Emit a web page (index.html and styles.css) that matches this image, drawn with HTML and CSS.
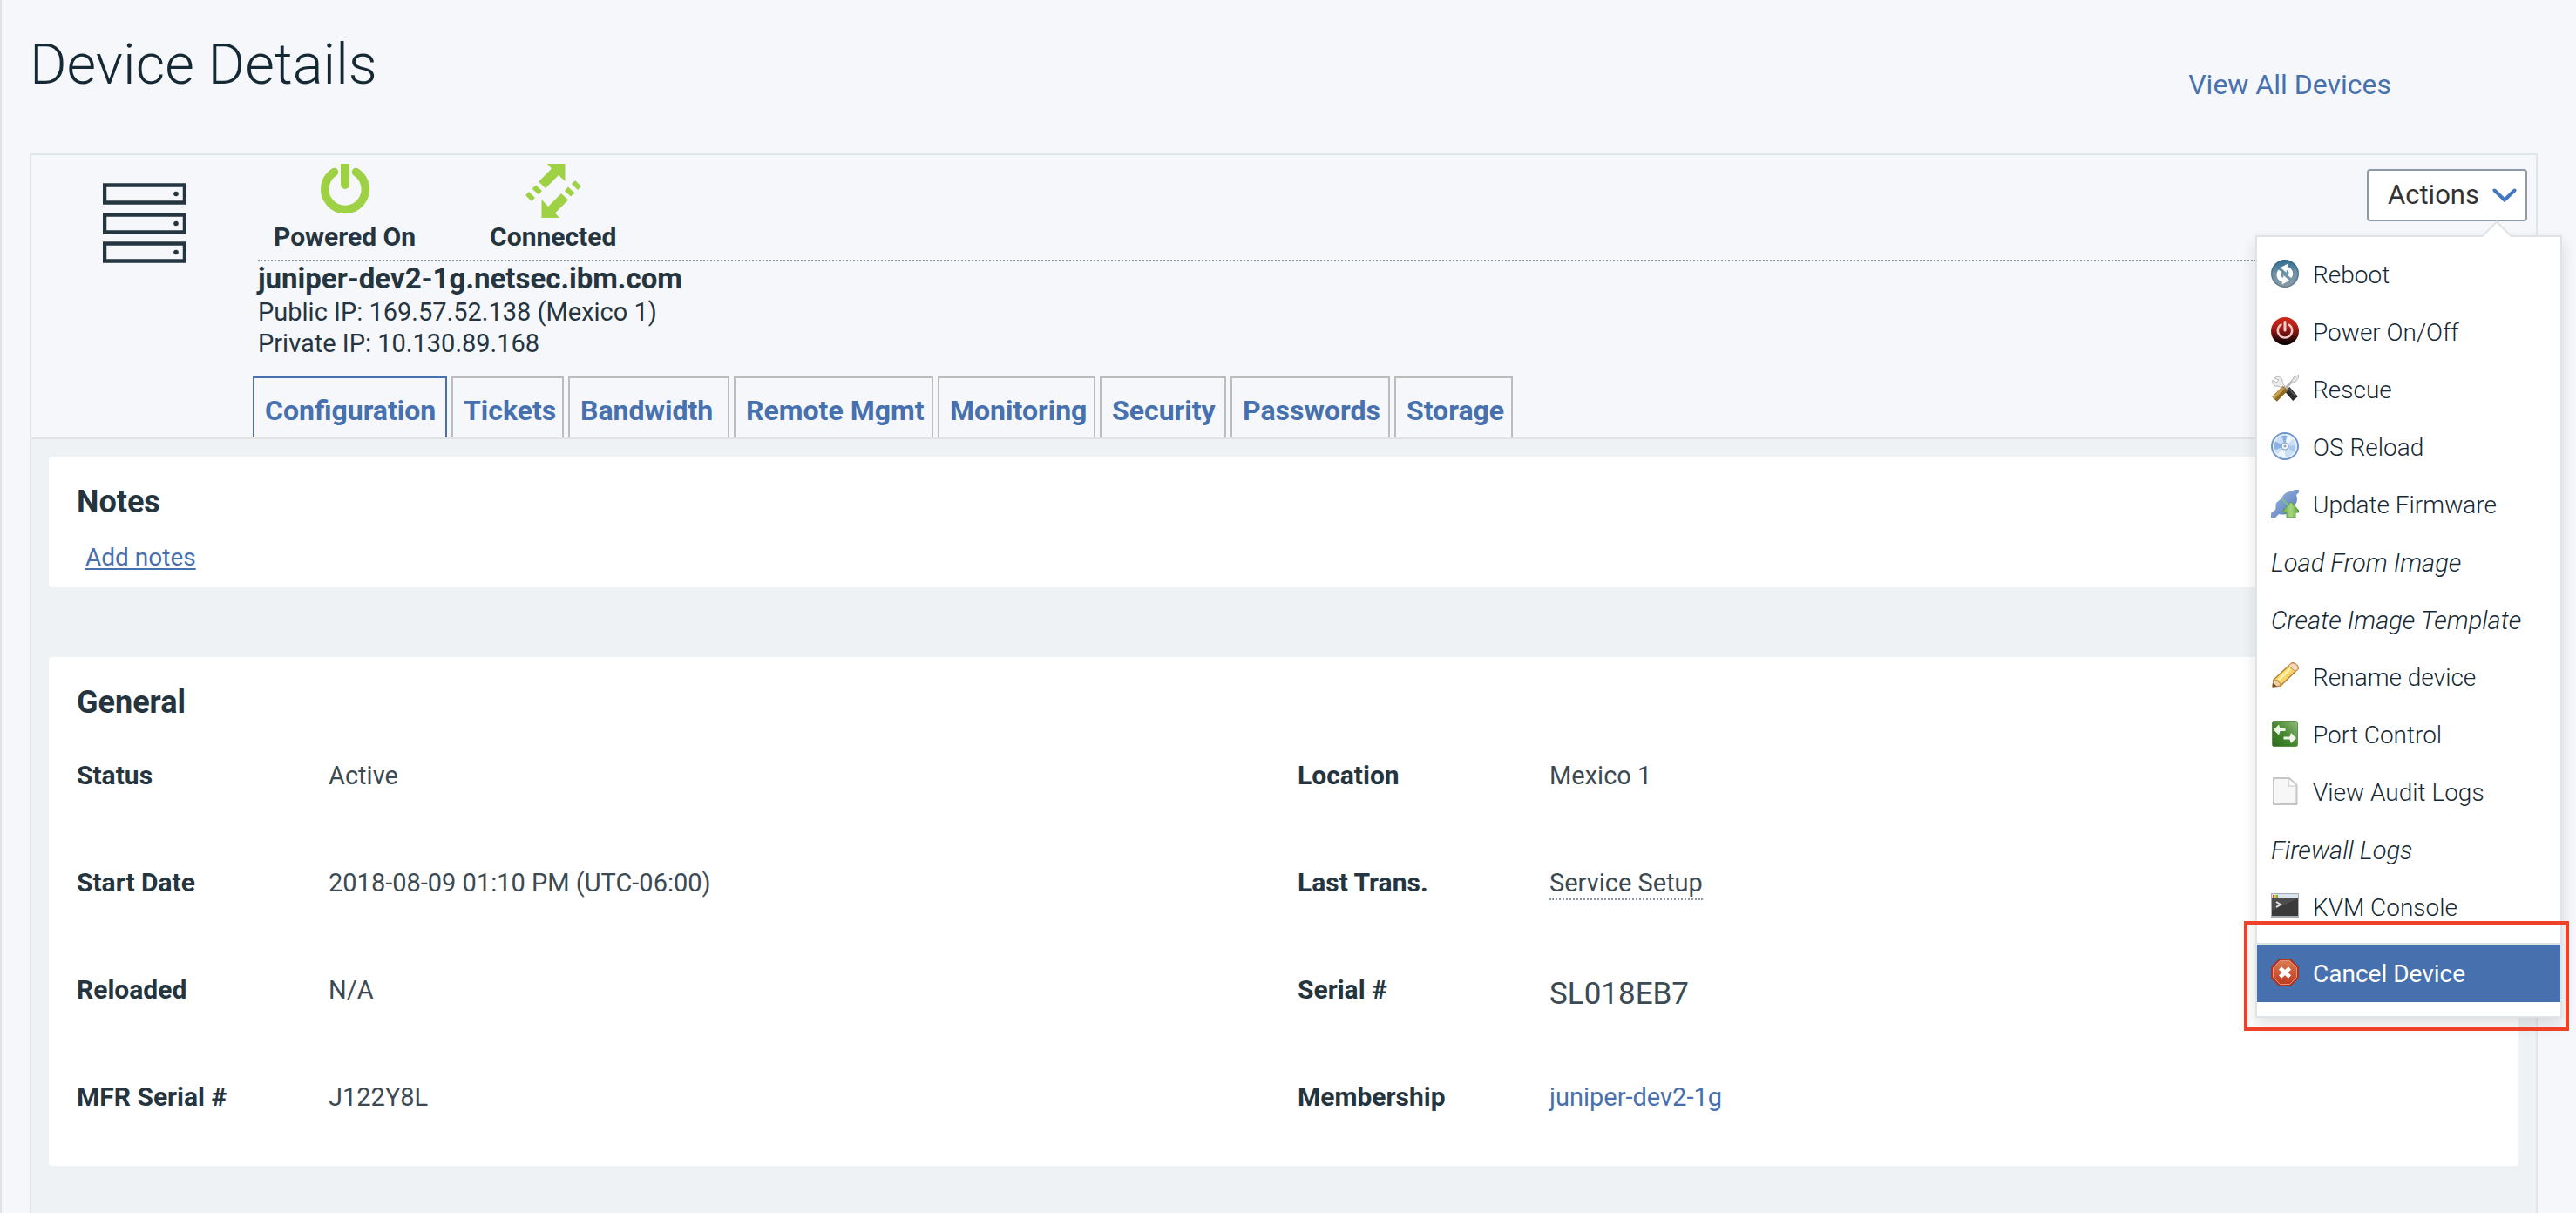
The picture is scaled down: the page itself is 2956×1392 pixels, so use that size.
FILE: index.html
```html
<!DOCTYPE html>
<html lang="en">
<head>
<meta charset="utf-8">
<title>Device Details</title>
<link rel="stylesheet" href="styles.css">
</head>
<body>
<header class="page-head">
  <h1 class="page-title">Device Details</h1>
  <a class="view-all" href="#devices">View All Devices</a>
</header>

<main class="card">
  <section class="device">
    <svg class="server-icon" viewBox="0 0 96 92" aria-hidden="true">
      <g fill="none" stroke="#253540" stroke-width="4.500">
        <path d="M2 2.500h92v20H2zM2 36.500h92v20H2zM2 69.500h92v20H2z"/>
      </g>
      <g fill="#253540"><circle cx="84" cy="12.500" r="2.800"/><circle cx="84" cy="46.500" r="2.800"/><circle cx="84" cy="79.500" r="2.800"/></g>
    </svg>

    <div class="device-main">
      <div class="states">
        <div class="state">
          <svg width="64" height="62" viewBox="0 0 64 62" aria-hidden="true">
            <path d="M19.500 9.500A23.300 23.300 0 1 0 44.500 9.500" fill="none" stroke="#9fd145" stroke-width="9.500" stroke-linecap="round"/>
            <path d="M27 0h10v24a5 5 0 0 1-10 0z" fill="#9fd145"/>
          </svg>
          <span>Powered On</span>
        </div>
        <div class="state">
          <svg width="64" height="62" viewBox="0 0 64 62" aria-hidden="true">
            <g fill="#9fd145">
              <path d="M25 0H45.500V20L38 13L23 28L15 20.500L30 5.500z"/>
              <path d="M39 62H18.500V41L26 49L41 34L49 41.500L34 56.500z"/>
              <path d="M12 24.500l7 6.500-4 4.500-7.500-7zM4 32l7 7-4 4-7-7z"/>
              <path d="M52 37.500l-7-6.500 4-4.500 7.500 7zM60 30l-7-7 4-4 7 7z"/>
            </g>
          </svg>
          <span>Connected</span>
        </div>
      </div>
      <h2 class="device-name">juniper-dev2-1g.netsec.ibm.com</h2>
      <p class="ip">Public IP: 169.57.52.138 (Mexico 1)</p>
      <p class="ip">Private IP: 10.130.89.168</p>
    </div>

    <div class="actions">
      <button class="actions-btn" type="button" aria-haspopup="true" aria-expanded="true">
        Actions
        <svg width="28" height="18" viewBox="0 0 28 18" aria-hidden="true"><path d="M2.500 3.500L14 14.500L25.500 3.500" fill="none" stroke="#4377c2" stroke-width="4" stroke-linecap="round"/></svg>
      </button>
      <div class="menu">
        <svg class="menu-arrow" width="36" height="20" viewBox="0 0 36 20" aria-hidden="true">
          <path d="M0 20L18 2L36 20z" fill="#fff"/>
          <path d="M1 18.500L18 1.500L35 18.500" fill="none" stroke="#dfe3e6" stroke-width="2"/>
        </svg>
        <ul class="menu-list">
          <li><button class="item" type="button">
            <svg class="ico" viewBox="0 0 32 32" aria-hidden="true">
              <defs><linearGradient id="gReboot" x1="0" y1="0" x2="0" y2="1"><stop offset="0" stop-color="#2f6b91"/><stop offset=".5" stop-color="#6d94a8"/><stop offset="1" stop-color="#8b9ba3"/></linearGradient></defs>
              <circle cx="16" cy="16" r="16" fill="url(#gReboot)"/>
              <circle cx="16" cy="16" r="15.200" fill="none" stroke="#34566b" stroke-opacity=".4" stroke-width="1.500"/>
              <path d="M11 9l8.500-4.500-.5 3.500c6 2 8 8 4.500 13l-4-2.500c2-3 1-5.500-1.500-6.500l-.5 3z" fill="#fff"/>
              <path d="M21 24l-8.500 4.500.5-3c-7-2-8-9-4.500-14l4 2.500c-2 3-1 6 1.500 7l.5-3z" fill="#fff"/>
            </svg>Reboot</button></li>
          <li><button class="item" type="button">
            <svg class="ico" viewBox="0 0 32 32" aria-hidden="true">
              <defs><linearGradient id="gPower" x1="0" y1="0" x2="0" y2="1"><stop offset="0" stop-color="#d2281b"/><stop offset=".4" stop-color="#a81a14"/><stop offset=".8" stop-color="#2c0606"/><stop offset="1" stop-color="#000"/></linearGradient></defs>
              <circle cx="16" cy="16" r="16" fill="url(#gPower)"/>
              <path d="M11.500 8.500A8.200 8.200 0 1 0 20.500 8.500" fill="none" stroke="#eec5c2" stroke-width="2.500" stroke-linecap="round"/>
              <path d="M16 5.500V15" stroke="#f3cfcc" stroke-width="3" stroke-linecap="round"/>
            </svg>Power On/Off</button></li>
          <li><button class="item" type="button">
            <svg class="ico" viewBox="0 0 32 32" aria-hidden="true">
              <path d="M15 17L25 7" stroke="#b9b9b9" stroke-width="3"/>
              <path d="M23.500 7l3-4.500 5-2v3l-3 4-4 2z" fill="#e4e4e4" stroke="#b5b5b5"/>
              <path d="M4 4c3-3 8-2 9 2 0 2 0 4 3 7l-3 3c-3-3-5-3-8-3-4-2-4-5-3-7l4 3 3-3z" fill="#ededed" stroke="#b5b5b5"/>
              <path d="M18.500 16.500L28 27.500" stroke="#2b2b2b" stroke-width="7.500"/>
              <path d="M19 14.500l9 10" stroke="#5c5c5c" stroke-width="1.500"/>
              <path d="M16.500 15.500L4 28" stroke="#8d6a25" stroke-width="8"/>
              <path d="M14.500 15L2.500 27" stroke="#c89d49" stroke-width="3.500"/>
            </svg>Rescue</button></li>
          <li><button class="item" type="button">
            <svg class="ico" viewBox="0 0 32 32" aria-hidden="true">
              <circle cx="16" cy="16" r="15" fill="#cbe0f6" stroke="#6f95cc" stroke-width="2"/>
              <path d="M16 16L12 3.500h6zM16 16L4 10l-.5 8 2 2z" fill="#8bb2e2"/>
              <path d="M16 16L19 3.500l7 3.500zM16 16l-9 10 9 3z" fill="#eef6fe"/>
              <path d="M16 16l13-1-2 8z" fill="#a9caee"/>
              <circle cx="16" cy="16" r="13.200" fill="none" stroke="#e3effb" stroke-width="1.500"/>
              <circle cx="16" cy="16" r="4.500" fill="#8fa9c9"/><circle cx="16" cy="16" r="3.200" fill="#fff"/><circle cx="16" cy="16" r="1.600" fill="#8ba5c5"/>
            </svg>OS Reload</button></li>
          <li><button class="item" type="button">
            <svg class="ico" viewBox="0 0 32 32" aria-hidden="true">
              <defs><linearGradient id="gPlug" x1="0" y1="0" x2="1" y2="1"><stop offset="0" stop-color="#a3bbe2"/><stop offset="1" stop-color="#4c74b8"/></linearGradient><linearGradient id="gUp" x1="0" y1="0" x2="1" y2="0"><stop offset="0" stop-color="#6fae4e"/><stop offset=".5" stop-color="#a9d67f"/><stop offset="1" stop-color="#5f9f40"/></linearGradient></defs>
              <path d="M32 0h-5l-4 2c-6 0-9 4-11 8l-6 5c-1 3 0 6-1 8l-5 4v5h5l4-4c8 2 14-1 16-8 5-4 6-9 4-14l3-3z" fill="url(#gPlug)"/>
              <path d="M12 10l10 10" stroke="#7fbf85" stroke-width="2"/>
              <path d="M23 14l9 10v2h-4v6h-10v-6h-4v-2z" fill="url(#gUp)" stroke="#5d9a40"/>
            </svg>Update Firmware</button></li>
          <li><button class="item item-off" type="button">Load From Image</button></li>
          <li><button class="item item-off" type="button">Create Image Template</button></li>
          <li><button class="item" type="button">
            <svg class="ico" viewBox="0 0 32 32" aria-hidden="true">
              <path d="M2 28l1-8L23 1.500c3-2 9 2 8 6L11 27l-8 1z" fill="#f7d56b" stroke="#b98237" stroke-width="1.500"/>
              <path d="M23 1.500c3-2 9 2 8 6l-3 3-8-6.500z" fill="#f7d9bd" stroke="#c98f4e"/>
              <path d="M9 20L22 7.500" stroke="#fff0a8" stroke-width="3"/>
              <path d="M3 20c4 0 8 3 8 7l-9 1z" fill="#ead0a3" stroke="#b98237"/>
              <path d="M2.500 24l4 3.500-4.500.5z" fill="#5a3a17"/>
            </svg>Rename device</button></li>
          <li><button class="item" type="button">
            <svg class="ico" viewBox="0 0 32 32" aria-hidden="true">
              <defs><linearGradient id="gPort" x1="1" y1="0" x2="0" y2="1"><stop offset="0" stop-color="#94bd7e"/><stop offset=".5" stop-color="#478a31"/><stop offset="1" stop-color="#2a6b1b"/></linearGradient></defs>
              <rect x="1.500" y="1.500" width="29" height="29" rx="2" fill="url(#gPort)" stroke="#5b9046"/>
              <path d="M3 11.500L9 5.500l1.500 4.500h6v3h-6L9 17.500z" fill="#f0f7ea"/>
              <path d="M29 21L23 15l-1.500 4.500h-7v3h7L23 27z" fill="#f0f7ea"/>
            </svg>Port Control</button></li>
          <li><button class="item" type="button">
            <svg class="ico" viewBox="0 0 32 32" aria-hidden="true">
              <path d="M3 1h18l8.500 8v22H3z" fill="#f7f7f7" stroke="#c6c6c6" stroke-width="2" stroke-linejoin="round"/>
              <path d="M20.500 2v8H29" fill="#fff" stroke="#d8d8d8" stroke-width="1.500"/>
            </svg>View Audit Logs</button></li>
          <li><button class="item item-off" type="button">Firewall Logs</button></li>
          <li><button class="item" type="button">
            <svg class="ico" viewBox="0 0 32 32" aria-hidden="true">
              <path d="M0 1h32v28H0z" fill="#a7adb4"/><path d="M1 2h30v4H1z" fill="#dbe3ec"/>
              <path d="M2 3h2v3H2z" fill="#d9503f"/><path d="M4 3h2v3H4z" fill="#e9c445"/><path d="M6 3h2v3H6z" fill="#77b54a"/>
              <path d="M1 7h30v20H1z" fill="#3a3a3a"/><path d="M1 7h30L1 21z" fill="#4d4d4d"/>
              <path d="M6 11l5 3-5 3" fill="none" stroke="#e4e4e4" stroke-width="2"/>
            </svg>KVM Console</button></li>
          <li class="last"><button class="item item-active" type="button">
            <svg class="ico" viewBox="0 0 32 32" aria-hidden="true">
              <defs><linearGradient id="gStop" x1="0" y1="0" x2="0" y2="1"><stop offset="0" stop-color="#dc7a50"/><stop offset="1" stop-color="#bd3a20"/></linearGradient></defs>
              <path d="M9.500 0h13L32 9.500v13L22.500 32h-13L0 22.500v-13z" fill="#b03326"/>
              <path d="M10.500 2.500h11l8 8v11l-8 8h-11l-8-8v-11z" fill="url(#gStop)" stroke="#e2987a"/>
              <path d="M10.500 11l11 10M21.500 11l-11 10" stroke="#fff" stroke-width="4.500"/>
            </svg>Cancel Device</button><span class="highlight"></span></li>
        </ul>
      </div>
    </div>

    <nav class="tabs">
      <a class="tab tab-on" href="#configuration">Configuration</a>
      <a class="tab" href="#tickets">Tickets</a>
      <a class="tab" href="#bandwidth">Bandwidth</a>
      <a class="tab" href="#remote">Remote Mgmt</a>
      <a class="tab" href="#monitoring">Monitoring</a>
      <a class="tab" href="#security">Security</a>
      <a class="tab" href="#passwords">Passwords</a>
      <a class="tab" href="#storage">Storage</a>
    </nav>
  </section>

  <div class="content">
    <section class="panel panel-notes">
      <h2 class="panel-title">Notes</h2>
      <a class="add-notes" href="#notes">Add notes</a>
    </section>

    <section class="panel panel-general">
      <h2 class="panel-title">General</h2>
      <div class="facts">
        <dl class="fact-list">
          <div class="fact"><dt>Status</dt><dd>Active</dd></div>
          <div class="fact"><dt>Start Date</dt><dd>2018-08-09 01:10 PM (UTC-06:00)</dd></div>
          <div class="fact"><dt>Reloaded</dt><dd>N/A</dd></div>
          <div class="fact"><dt>MFR Serial #</dt><dd>J122Y8L</dd></div>
        </dl>
        <dl class="fact-list">
          <div class="fact"><dt>Location</dt><dd>Mexico 1</dd></div>
          <div class="fact"><dt>Last Trans.</dt><dd><span class="hint">Service Setup</span></dd></div>
          <div class="fact"><dt>Serial #</dt><dd class="serial">SL018EB7</dd></div>
          <div class="fact"><dt>Membership</dt><dd><a class="link" href="#juniper-dev2-1g">juniper-dev2-1g</a></dd></div>
        </dl>
      </div>
    </section>
  </div>
</main>
</body>
</html>
```
FILE: styles.css
```css
* { box-sizing: border-box; }

body {
  margin: 0;
  min-height: 100vh;
  display: flex;
  flex-direction: column;
  border-left: 2px solid #dfe3e6;
  background: #f5f7fb;
  color: #253540;
  font-family: Roboto, "Liberation Sans", sans-serif;
  font-size: 29px;
  line-height: 36px;
}

h1, h2, p, ul, dl, dd { margin: 0; padding: 0; }
a { color: #4770ae; text-decoration: none; }
button { font: inherit; cursor: pointer; }
svg { display: block; flex: none; }

.page-head {
  display: flex;
  justify-content: space-between;
  align-items: flex-start;
  padding: 36px 212px 59px 32px;
}
.page-title {
  font-size: 65px;
  font-weight: 300;
  line-height: 76px;
  color: #152935;
}
.view-all {
  margin-top: 41px;
  font-size: 32px;
  line-height: 40px;
}

.card {
  flex: 1;
  display: flex;
  flex-direction: column;
  margin: 0 44px 0 32px;
  border: 2px solid #dfe6e9;
  border-bottom: 0;
}

/* device summary */
.device {
  display: grid;
  grid-template-columns: 260px 1fr 184px;
  padding-right: 10px;
  border-bottom: 2px solid #dfe3e6;
}
.server-icon { width: 96px; height: 92px; margin: 32px 0 0 82px; }
.device-main { padding-top: 10px; }
.states {
  display: flex;
  gap: 85px;
  padding: 0 18px 8px;
  border-bottom: 2px dotted #8c9ba5;
}
.state {
  display: flex;
  flex-direction: column;
  align-items: center;
  gap: 4px;
  font-size: 30px;
  font-weight: 700;
}
.device-name { font-size: 33px; line-height: 40px; font-weight: 700; }

.tabs {
  grid-column: 1 / -1;
  display: grid;
  grid-template-columns: 223px 129px 185px 229px 181px 145px 183px 136px;
  gap: 5px;
  margin: 20px 0 0 254px;
}
.tab {
  padding: 17px 0 11px 12px;
  border: 2px solid #bcbcbc;
  border-bottom: 0;
  font-size: 32px;
  font-weight: 700;
  line-height: 40px;
}
.tab-on { border-color: #4770ae; }

/* actions menu */
.actions { position: relative; margin-top: 16px; height: 60px; }
.actions-btn {
  display: flex;
  align-items: center;
  justify-content: space-between;
  width: 100%;
  height: 60px;
  padding: 0 10px 0 22px;
  border: 2px solid #8c9ba5;
  border-radius: 4px;
  background: #fff;
  color: #323232;
  font-size: 31px;
}
.menu {
  position: absolute;
  top: 76px;
  right: -40px;
  width: 352px;
  border: 2px solid #dfe3e6;
  background: #fff;
  box-shadow: 0 8px 16px rgba(0, 0, 0, .12);
  z-index: 1;
}
.menu-arrow { position: absolute; top: -19px; right: 55px; }
.menu-list { list-style: none; padding: 10px 0 16px; }
.item {
  display: flex;
  align-items: center;
  gap: 16px;
  width: 100%;
  padding: 16px 0 14px 16px;
  border: 0;
  background: none;
  color: #152935;
  font-size: 28px;
  font-weight: 300;
  line-height: 36px;
  text-align: left;
}
.item-off { font-size: 29px; font-style: italic; }
.item-active { background: #4770ae; color: #fff; font-weight: 400; }
.ico { width: 32px; height: 32px; align-self: flex-start; }
.last { position: relative; margin-top: 8px; border-top: 2px solid #dfe3e6; }
.highlight {
  position: absolute;
  top: -27px;
  right: -10px;
  bottom: -33px;
  left: -15px;
  border: 4px solid #ee4128;
  pointer-events: none;
}

/* tab content */
.content {
  flex: 1;
  display: flex;
  flex-direction: column;
  gap: 80px;
  padding: 20px 20px 54px;
  background: #eef2f5;
}
.panel { padding: 30px 0 0 32px; border-radius: 4px; background: #fff; }
.panel-title { font-size: 36px; font-weight: 700; line-height: 44px; }
.panel-notes { padding-bottom: 16px; }
.panel-general { padding-bottom: 61px; }
.add-notes {
  display: inline-block;
  margin: 24px 0 0 10px;
  font-size: 28px;
  text-decoration: underline;
  text-decoration-thickness: 2px;
  text-underline-offset: 3px;
}
.facts { display: grid; grid-template-columns: 1fr 1fr; margin-top: 44px; }
.fact-list { display: grid; grid-auto-rows: 36px; gap: 87px; }
.fact { display: grid; grid-template-columns: 289px 1fr; align-items: start; }
.fact dt { font-size: 30px; font-weight: 700; }
.fact dd { color: #3c4a54; }
.fact .serial { font-size: 35px; line-height: 46px; }
.hint { display: inline-block; border-bottom: 2px dotted #8c9ba5; }
```
